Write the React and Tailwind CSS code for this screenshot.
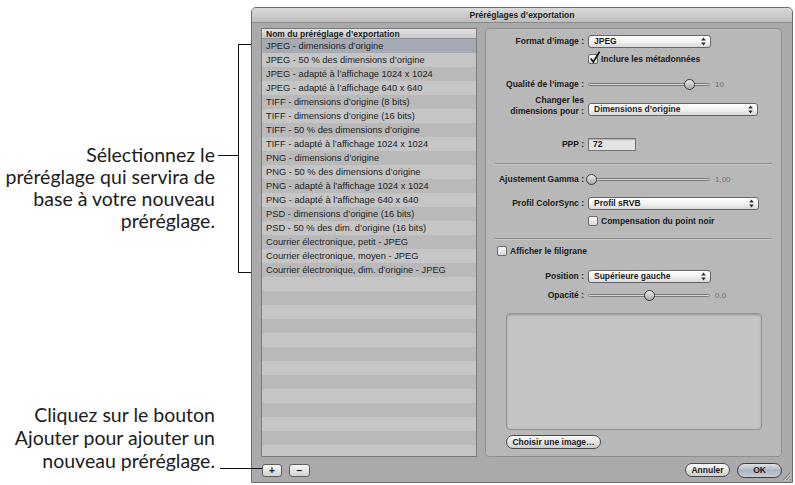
import React from 'react';

const presets = [
  'JPEG - dimensions d’origine',
  'JPEG - 50 % des dimensions d’origine',
  'JPEG - adapté à l’affichage 1024 x 1024',
  'JPEG - adapté à l’affichage 640 x 640',
  'TIFF - dimensions d’origine (8 bits)',
  'TIFF - dimensions d’origine (16 bits)',
  'TIFF - 50 % des dimensions d’origine',
  'TIFF - adapté à l’affichage 1024 x 1024',
  'PNG - dimensions d’origine',
  'PNG - 50 % des dimensions d’origine',
  'PNG - adapté à l’affichage 1024 x 1024',
  'PNG - adapté à l’affichage 640 x 640',
  'PSD - dimensions d’origine (16 bits)',
  'PSD - 50 % des dim. d’origine (16 bits)',
  'Courrier électronique, petit - JPEG',
  'Courrier électronique, moyen - JPEG',
  'Courrier électronique, dim. d’origine - JPEG',
];

// pad the table with empty striped rows
const rows = [...presets, ...Array(13).fill('')];

const Arrows = () => (
  <svg width="5" height="9" viewBox="0 0 5 9">
    <path d="M2.5 0.5L4.8 3.4H0.2z M2.5 8.5L0.2 5.6h4.6z" fill="#2a2a2a" />
  </svg>
);

const Popup = ({ width, children }) => (
  <div className={`${width} h-[13px] rounded-[3px] border border-[#666] bg-linear-to-b from-white via-[#f3f3f3] to-[#d9d9d9] flex items-center justify-between pl-[5px] pr-[4px] text-[8.5px] font-bold leading-none text-[#1a1a1a]`}>
    <span>{children}</span>
    <Arrows />
  </div>
);

const Check = ({ checked }) => (
  <div className="relative w-[10px] h-[10px] shrink-0 rounded-[2px] border border-[#6a6a6a] bg-linear-to-b from-white to-[#d6d6d6]">
    {checked && (
      <svg className="absolute -top-[4px] left-[0px]" width="12" height="13" viewBox="0 0 12 13">
        <path d="M1.8 7.5 L4.3 11 L10.5 0.8" stroke="#151515" strokeWidth="1.7" fill="none" />
      </svg>
    )}
  </div>
);

const Slider = ({ knob, value }) => (
  <div className="flex items-center">
    <div className="relative w-[122px] h-[11px] flex items-center">
      <div className="w-full h-[3px] rounded-full border border-[#7b7b7b] bg-[#d4d4d4]" />
      <div
        className="absolute top-0 w-[11px] h-[11px] rounded-full border-[1.5px] border-[#3a3a3a] bg-linear-to-b from-[#ececec] to-[#a9a9a9]"
        style={{ left: knob }}
      />
    </div>
    <span className="ml-[5px] text-[8px] text-[#6f6f6f] leading-none">{value}</span>
  </div>
);

const Label = ({ children }) => (
  <div className="w-[98px] shrink-0 text-right text-[8.5px] font-bold leading-[11px] text-[#1a1a1a]">{children}</div>
);

const Annotations = () => (
  <div className="w-[251px] shrink-0 flex flex-col font-['Lato',sans-serif] text-[19.5px] text-[#1c1c1c]">
    <div className="flex pt-[44px]">
      <div className="w-[215px] pt-[100px] text-right leading-[22px]">
        <p>Sélectionnez le</p>
        <p className="whitespace-nowrap">préréglage qui servira de</p>
        <p>base à votre nouveau</p>
        <p>préréglage.</p>
      </div>
      <div className="w-[23px] pt-[111px]">
        <div className="ml-[3px] border-t border-[#111]" />
      </div>
      <div className="w-[13px] h-[229px] border-l border-y border-[#111]" />
    </div>
    <div className="mt-auto pb-[13px] w-[215px] text-right leading-[23px]">
      <p>Cliquez sur le bouton</p>
      <p>Ajouter pour ajouter un</p>
      <p>
        <span className="relative">
          nouveau préréglage.
          <span className="absolute z-10 left-full top-[19px] ml-[5px] w-[42px] border-t border-[#111]" />
        </span>
      </p>
    </div>
  </div>
);

const PillButton = ({ width, children }) => (
  <div className={`${width} h-[14px] rounded-full border border-[#4a4a4a] bg-linear-to-b from-[#fdfdfd] via-[#e4e4e4] to-[#cdcdcd] flex items-center justify-center text-[8.5px] font-bold leading-none text-[#1a1a1a]`}>
    {children}
  </div>
);

const SmallButton = ({ width, children }) => (
  <div className={`${width} h-[13px] rounded-[3px] border border-[#5e5e5e] bg-linear-to-b from-[#fafafa] to-[#d0d0d0] flex items-center justify-center text-[10px] font-bold leading-none text-[#1a1a1a]`}>
    {children}
  </div>
);

const Window = () => (
  <div className="relative mt-[7px] w-[542px] h-[476px] border border-[#6c6c6c] rounded-t-[5px] bg-[#aaaaaa] flex flex-col overflow-hidden">
    <div className="h-[15px] shrink-0 border-b border-[#8a8a8a] bg-linear-to-b from-[#dadada] to-[#bdbdbd] flex items-center justify-center text-[8.5px] font-bold text-[#1e1e1e]">
      Préréglages d’exportation
    </div>

    <div className="flex gap-[8px] pl-[9px] pt-[5px]">
      {/* preset list */}
      <div className="w-[216px] h-[429px] border border-[#7c7c7c] bg-[#bababa] overflow-hidden">
        <div className="h-[10px] border-b border-[#8e8e8e] bg-linear-to-b from-[#e2e2e2] to-[#c9c9c9] pl-[4px] text-[8.5px] font-bold leading-[10px] text-[#1a1a1a]">
          Nom du préréglage d’exportation
        </div>
        {rows.map((name, i) => (
          <div
            key={i}
            className={`h-[14px] pl-[4px] text-[9.3px] leading-[14px] text-[#222] whitespace-nowrap ${
              i === 0 ? 'bg-[#a5aab5]' : i % 2 ? 'bg-[#c5c5c5]' : 'bg-[#b9b9b9]'
            }`}
          >
            {name}
          </div>
        ))}
      </div>

      {/* settings group */}
      <div className="w-[297px] h-[429px] rounded-[4px] border border-[#8f8f8f] bg-[#b8b8b8] flex flex-col">
        <div className="flex items-center mt-[6px]">
          <Label>Format d’image :</Label>
          <div className="ml-[4px]"><Popup width="w-[123px]">JPEG</Popup></div>
        </div>
        <div className="flex items-center mt-[6px] ml-[102px]">
          <Check checked />
          <span className="ml-[3px] text-[8.5px] font-bold leading-none text-[#1a1a1a]">Inclure les métadonnées</span>
        </div>
        <div className="flex items-center mt-[15px]">
          <Label>Qualité de l’image :</Label>
          <div className="ml-[4px]"><Slider knob={96} value="10" /></div>
        </div>
        <div className="flex items-start mt-[5px]">
          <Label>Changer les<br />dimensions pour :</Label>
          <div className="ml-[4px] mt-[8px]"><Popup width="w-[170px]">Dimensions d’origine</Popup></div>
        </div>
        <div className="flex items-center mt-[21px]">
          <Label>PPP :</Label>
          <div className="ml-[4px] w-[48px] h-[13px] border border-[#777] bg-[#e4e4e4] shadow-[inset_0_1px_1px_rgba(0,0,0,0.25)] pl-[4px] text-[8.5px] font-bold leading-[11px] text-[#1a1a1a]">
            72
          </div>
        </div>
        <div className="mt-[12px] mx-[9px] border-t border-[#8a8a8a] shadow-[0_1px_0_#cacaca]" />
        <div className="flex items-center mt-[10px]">
          <Label>Ajustement Gamma :</Label>
          <div className="ml-[4px]"><Slider knob={-2} value="1,00" /></div>
        </div>
        <div className="flex items-center mt-[12px]">
          <Label>Profil ColorSync :</Label>
          <div className="ml-[4px]"><Popup width="w-[171px]">Profil sRVB</Popup></div>
        </div>
        <div className="flex items-center mt-[6px] ml-[102px]">
          <Check />
          <span className="ml-[3px] text-[8.5px] font-bold leading-none text-[#1a1a1a]">Compensation du point noir</span>
        </div>
        <div className="mt-[12px] mx-[9px] border-t border-[#8a8a8a] shadow-[0_1px_0_#cacaca]" />
        <div className="flex items-center mt-[7px] ml-[11px]">
          <Check />
          <span className="ml-[3px] text-[8.5px] font-bold leading-none text-[#1a1a1a]">Afficher le filigrane</span>
        </div>
        <div className="flex items-center mt-[14px]">
          <Label>Position :</Label>
          <div className="ml-[4px]"><Popup width="w-[123px]">Supérieure gauche</Popup></div>
        </div>
        <div className="flex items-center mt-[7px]">
          <Label>Opacité :</Label>
          <div className="ml-[4px]"><Slider knob={56} value="0,0" /></div>
        </div>
        <div className="mt-[12px] ml-[20px] w-[256px] h-[117px] rounded-[4px] border border-[#949494] bg-[#c4c4c4] shadow-[inset_0_1px_2px_rgba(0,0,0,0.25)]" />
        <div className="mt-[5px] ml-[20px]">
          <PillButton width="w-[95px]">Choisir une image…</PillButton>
        </div>
      </div>
    </div>

    <div className="flex items-start pt-[7px] pl-[10px]">
      <SmallButton width="w-[20px]">+</SmallButton>
      <div className="ml-[7px]"><SmallButton width="w-[21px]">−</SmallButton></div>
      <div className="ml-auto mr-[10px] flex gap-[7px] -mt-[1px]">
        <PillButton width="w-[45px]">Annuler</PillButton>
        <div className="w-[45px] h-[15px] rounded-full border border-[#3c3c3c] bg-linear-to-b from-[#dfe2e7] via-[#aeb4be] to-[#c8cdd5] flex items-center justify-center text-[8.5px] font-bold leading-none text-[#1a1a1a]">
          OK
        </div>
      </div>
    </div>

    <svg className="absolute right-[1px] bottom-[1px]" width="10" height="10" viewBox="0 0 10 10">
      <path d="M9 2 L2 9 M9 5 L5 9 M9 8 L8 9" stroke="#7e7e7e" strokeWidth="1" />
      <path d="M10 3 L3 10 M10 6 L6 10" stroke="#d0d0d0" strokeWidth="1" />
    </svg>
  </div>
);

export default function App() {
  return (
    <div className="w-[795px] h-[485px] bg-white flex overflow-hidden font-['Liberation_Sans',Arial,sans-serif]">
      <Annotations />
      <Window />
    </div>
  );
}
